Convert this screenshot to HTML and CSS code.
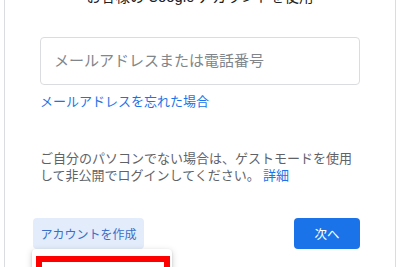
FILE: index.html
```html
<!DOCTYPE html>
<html lang="ja">
<head>
    <meta charset="UTF-8">
    <meta name="viewport" content="width=device-width, initial-scale=1.0">
    <title>ログイン - Google アカウント</title>
    <link rel="stylesheet" href="styles.css">
</head>
<body>
    <div class="card">
        <div class="subtitle">お客様の Google アカウントを使用</div>

        <div class="field">
            <input type="text" class="field-input" placeholder="メールアドレスまたは電話番号">
        </div>

        <a class="link forgot" href="#">メールアドレスを忘れた場合</a>

        <p class="guest">ご自分のパソコンでない場合は、ゲストモードを使用して非公開でログインしてください。 <a class="link" href="#">詳細</a></p>

        <div class="actions">
            <div class="create-wrap">
                <button class="btn btn-create">アカウントを作成</button>
                <div class="menu">
                    <div class="menu-mark"></div>
                </div>
            </div>
            <button class="btn btn-next">次へ</button>
        </div>
    </div>
</body>
</html>
```

FILE: styles.css
```css
html, body {
    margin: 0;
    height: 100%;
    overflow: hidden;
}
body {
    background: #fff;
    padding: 0 4px;
    font-family: Roboto, "Noto Sans CJK JP", sans-serif;
    color: #202124;
}
.card {
    margin-top: -13px;
    border: 1px solid #dadce0;
    padding: 0 35px;
    height: 320px;
}
.subtitle {
    text-align: center;
    font-size: 14.5px;
    line-height: 20px;
    color: #202124;
}
.field {
    margin-top: 29px;
}
.field-input {
    box-sizing: border-box;
    width: 100%;
    height: 48px;
    border: 1px solid #dadce0;
    border-radius: 4px;
    padding: 0 13px;
    font-family: inherit;
    font-size: 15px;
    color: #202124;
    outline: none;
}
.field-input::placeholder {
    color: #80868b;
}
.link {
    color: #1a73e8;
    text-decoration: none;
}
.forgot {
    display: inline-block;
    margin-top: 8px;
    font-size: 13px;
    line-height: 17px;
}
.guest {
    margin: 40px 0 0;
    font-size: 13px;
    line-height: 17px;
    color: #5f6368;
}
.actions {
    display: flex;
    justify-content: space-between;
    align-items: center;
    margin-top: 34px;
}
.create-wrap {
    position: relative;
    margin-left: -7px;
}
.btn {
    height: 31px;
    border: none;
    border-radius: 4px;
    font-family: inherit;
    font-size: 12px;
    cursor: pointer;
}
.btn-create {
    background: #e3ecfa;
    color: #3a6fc9;
    padding: 0 7px;
    width: 111px;
}
.btn-next {
    background: #1a73e8;
    color: #fff;
    width: 66px;
    font-size: 12.5px;
}
.menu {
    position: absolute;
    left: -1px;
    top: 31px;
    width: 140px;
    height: 60px;
    background: #fff;
    border-radius: 4px;
    box-shadow: 0 2px 6px rgba(60, 64, 67, 0.25), 0 1px 2px rgba(60, 64, 67, 0.2);
    padding: 7px 2px 0 4px;
    box-sizing: border-box;
}
.menu-mark {
    height: 40px;
    width: 134px;
    box-sizing: border-box;
    border: 6px solid #ff0000;
}
```
